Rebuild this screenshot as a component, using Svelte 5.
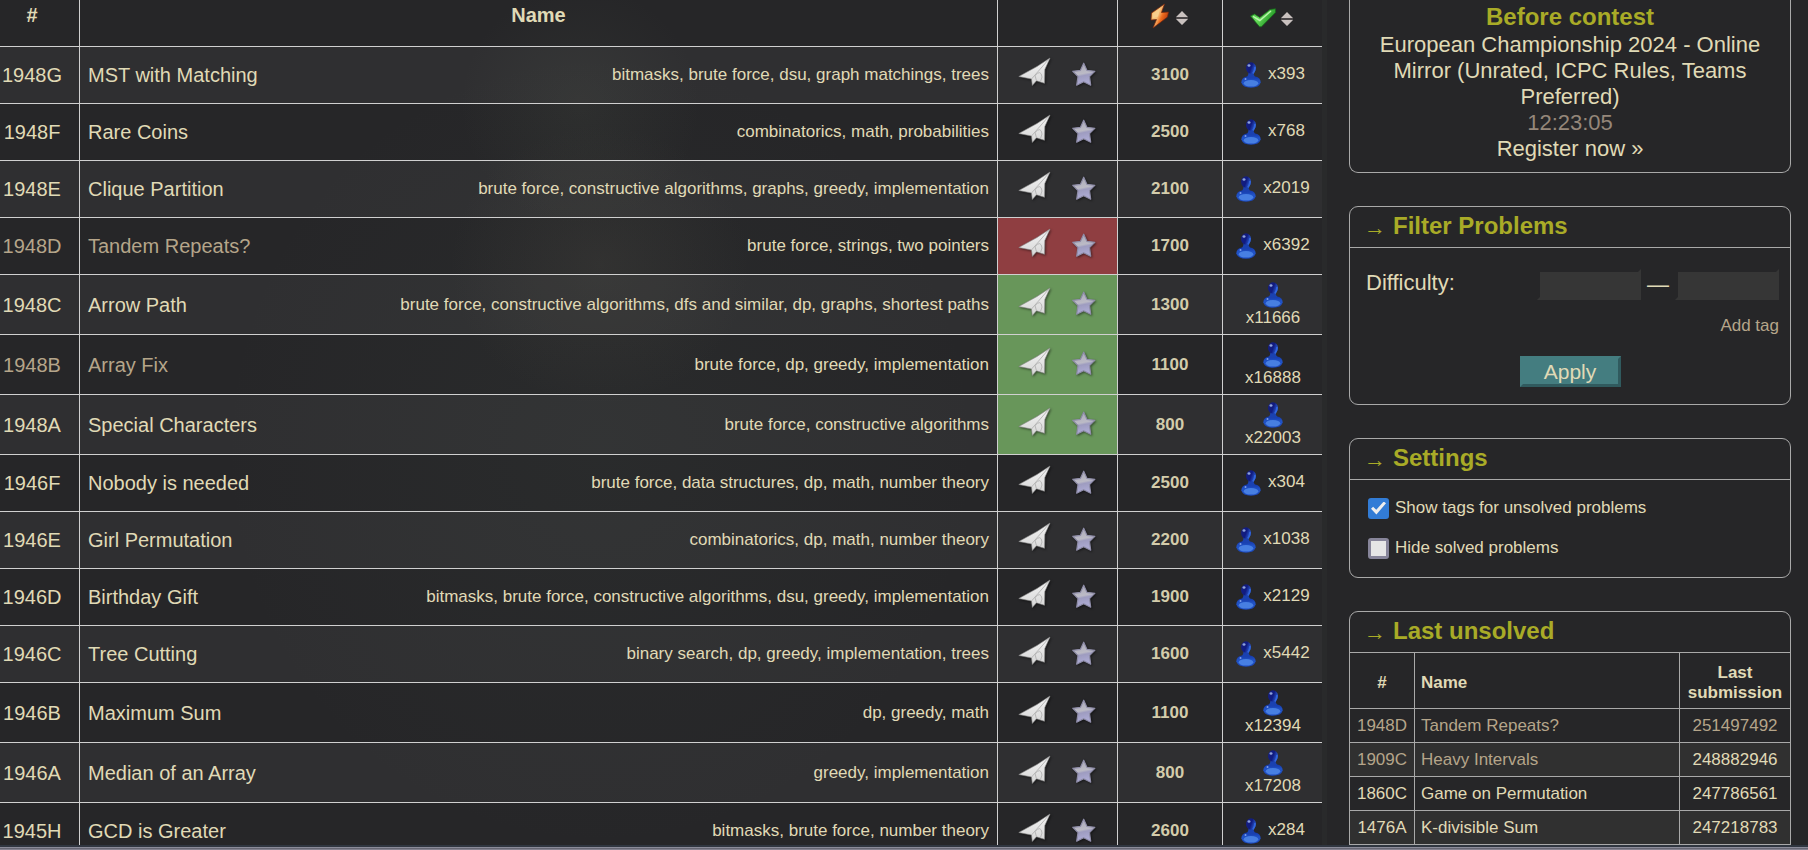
<script>
  const problems = [
    { id: '1948G', name: 'MST with Matching', tags: 'bitmasks, brute force, dsu, graph matchings, trees', rating: 3100, solved: 393 },
    { id: '1948F', name: 'Rare Coins', tags: 'combinatorics, math, probabilities', rating: 2500, solved: 768 },
    { id: '1948E', name: 'Clique Partition', tags: 'brute force, constructive algorithms, graphs, greedy, implementation', rating: 2100, solved: 2019 },
    { id: '1948D', name: 'Tandem Repeats?', tags: 'brute force, strings, two pointers', rating: 1700, solved: 6392, state: 'rejected', visited: true },
    { id: '1948C', name: 'Arrow Path', tags: 'brute force, constructive algorithms, dfs and similar, dp, graphs, shortest paths', rating: 1300, solved: 11666, state: 'accepted' },
    { id: '1948B', name: 'Array Fix', tags: 'brute force, dp, greedy, implementation', rating: 1100, solved: 16888, state: 'accepted', visited: true },
    { id: '1948A', name: 'Special Characters', tags: 'brute force, constructive algorithms', rating: 800, solved: 22003, state: 'accepted' },
    { id: '1946F', name: 'Nobody is needed', tags: 'brute force, data structures, dp, math, number theory', rating: 2500, solved: 304 },
    { id: '1946E', name: 'Girl Permutation', tags: 'combinatorics, dp, math, number theory', rating: 2200, solved: 1038 },
    { id: '1946D', name: 'Birthday Gift', tags: 'bitmasks, brute force, constructive algorithms, dsu, greedy, implementation', rating: 1900, solved: 2129 },
    { id: '1946C', name: 'Tree Cutting', tags: 'binary search, dp, greedy, implementation, trees', rating: 1600, solved: 5442 },
    { id: '1946B', name: 'Maximum Sum', tags: 'dp, greedy, math', rating: 1100, solved: 12394 },
    { id: '1946A', name: 'Median of an Array', tags: 'greedy, implementation', rating: 800, solved: 17208 },
    { id: '1945H', name: 'GCD is Greater', tags: 'bitmasks, brute force, number theory', rating: 2600, solved: 284 }
  ];

  const unsolved = [
    { id: '1948D', name: 'Tandem Repeats?', submission: '251497492', visited: true, opened: true },
    { id: '1909C', name: 'Heavy Intervals', submission: '248882946', visited: true },
    { id: '1860C', name: 'Game on Permutation', submission: '247786561' },
    { id: '1476A', name: 'K-divisible Sum', submission: '247218783' }
  ];

  let showTags = $state(true);
  let hideSolved = $state(false);
  const rows = $derived(hideSolved ? problems.filter((p) => p.state !== 'accepted') : problems);
</script>

{#snippet sorter()}
  <svg class="sorter" width="12" height="14" viewBox="0 0 12 14" aria-hidden="true">
    <path d="M6 0 12 6H0Z M6 14 12 8H0Z" fill="#c9c1bf" />
    <path d="M0 6h12v2H0z" fill="#4a4648" />
  </svg>
{/snippet}

<svg class="defs" width="0" height="0" aria-hidden="true">
  <defs>
    <linearGradient id="paper" x1="0" y1="0" x2="0" y2="1">
      <stop offset="0" stop-color="#f4f4f4" /><stop offset="1" stop-color="#d6d6d6" />
    </linearGradient>
    <linearGradient id="starfill" x1="0.3" y1="0" x2="0.5" y2="1">
      <stop offset="0" stop-color="#aaa9b8" /><stop offset="0.48" stop-color="#bcbbc6" />
      <stop offset="0.58" stop-color="#9e9cc0" /><stop offset="1" stop-color="#b0aed8" />
    </linearGradient>
    <linearGradient id="bolt" x1="0" y1="0.2" x2="1" y2="0.8">
      <stop offset="0" stop-color="#f2a44d" /><stop offset="0.4" stop-color="#f6c37c" />
      <stop offset="0.6" stop-color="#ee6c1e" /><stop offset="1" stop-color="#9b2408" />
    </linearGradient>
    <linearGradient id="tick" x1="0" y1="0" x2="1" y2="0.5">
      <stop offset="0" stop-color="#2f9f32" /><stop offset="0.45" stop-color="#6be05e" />
      <stop offset="1" stop-color="#178a1c" />
    </linearGradient>
    <linearGradient id="head" x1="0" y1="0" x2="1" y2="0.4">
      <stop offset="0" stop-color="#182080" /><stop offset="0.6" stop-color="#101b80" />
      <stop offset="1" stop-color="#2a59d0" />
    </linearGradient>
    <linearGradient id="base" x1="0" y1="0" x2="0" y2="1">
      <stop offset="0" stop-color="#1437a8" /><stop offset="0.4" stop-color="#2153c6" />
      <stop offset="1" stop-color="#1b49bd" />
    </linearGradient>
  </defs>
</svg>

<div class="page">
  <div class="content">
    <main>
      <table class="problems">
        <colgroup><col class="c-id" /><col /><col class="c-act" /><col class="c-rate" /><col class="c-solved" /></colgroup>
        <thead>
          <tr>
            <th>#</th>
            <th>Name</th>
            <th></th>
            <th>
              <button class="sort" aria-label="Sort by difficulty">
                <svg width="20" height="26" viewBox="0 0 20 26" aria-hidden="true">
                  <path d="M14.500 1 1.500 10 1 17 6.500 16.500 3 25 17.500 14 18.500 9 11.500 9.500Z" fill="url(#bolt)" stroke="#7a250c" stroke-width="0.700" />
                  <path d="M2.500 10.500 10 5.500 8 13.500 2.500 15.500Z" fill="#f8d293" opacity="0.8" />
                </svg>
                {@render sorter()}
              </button>
            </th>
            <th>
              <button class="sort solved-sort" aria-label="Sort by solved count">
                <svg width="26" height="20" viewBox="0 0 26 20" aria-hidden="true">
                  <path d="M0.500 8 4.500 6 9.800 9.500 20 1.500 25.500 0.800 25.500 4.500 11.500 18.800H9.500Z" fill="url(#tick)" stroke="#176a1b" stroke-width="0.800" />
                  <path d="M3 8.300 9.800 12.500 21 3" fill="none" stroke="#b9f4ac" stroke-width="1.500" />
                </svg>
                {@render sorter()}
              </button>
            </th>
          </tr>
        </thead>
        <tbody>
          {#each rows as p (p.id)}
            <tr class:tall={p.solved > 9999}>
              <td class="id"><a href="#{p.id}" class:visited={p.visited}>{p.id}</a></td>
              <td class="name">
                <div class="title">
                  <a href="#{p.id}" class:visited={p.visited}>{p.name}</a>
                  {#if showTags}<span class="tags">{p.tags}</span>{/if}
                </div>
              </td>
              <td class="act {p.state ?? ''}">
                <div class="actions">
                  <button aria-label="Submit {p.id}">
                    <svg class="plane" width="34" height="30" viewBox="0 0 34 30" aria-hidden="true">
                      <path d="M32 1 19 9.500 0.800 19.500 13.500 22 14.300 28.500 18.500 23.800 26.500 26.300 26.800 12.500Z" fill="url(#paper)" stroke="#8a8a8a" stroke-width="0.600" />
                      <path d="M31 2 13.500 22M17 18.500Q23 12 24 20L22.500 24.500M17 18.500 18.500 23.800" fill="none" stroke="#b2b2b2" stroke-width="0.900" />
                    </svg>
                  </button>
                  <button aria-label="Add {p.id} to favourites">
                    <svg class="star" width="24" height="25" viewBox="0 0 24 25" aria-hidden="true">
                      <path d="M11.700 1.200 14.900 8.300 22.800 9.300 17.500 14.600 18.700 23.200 11.700 19.800 4.700 23.200 6 14.600 0.800 9.300 8.500 8.300Z" fill="url(#starfill)" stroke="#8f8da8" stroke-width="1.200" stroke-linejoin="round" />
                    </svg>
                  </button>
                </div>
              </td>
              <td class="rating">{p.rating}</td>
              <td>
                <a class="count" href="#solved-{p.id}">
                  <svg width="20" height="26" viewBox="0 0 20 26" aria-hidden="true">
                    <path d="M0.300 20.500Q0.500 15.500 5.500 14.500H14.500Q19.500 15.500 19.700 20.500Q18 25.700 10 25.700Q2 25.700 0.300 20.500Z" fill="url(#base)" />
                    <path d="M7.500 9H12.500Q12 13 15 16H5Q8 13 7.500 9Z" fill="#1a41b0" />
                    <ellipse cx="10" cy="6" rx="5" ry="5.700" fill="url(#head)" />
                    <path d="M12 11.500Q14 8.500 14 5" fill="none" stroke="#3266dc" stroke-width="1.600" />
                    <ellipse cx="10" cy="21.300" rx="7.300" ry="3.300" fill="#477fe2" />
                    <ellipse cx="8" cy="3.500" rx="1.500" ry="1.200" fill="#8fa3dc" />
                    <circle cx="4.500" cy="16.900" r="1" fill="#7fa0ea" />
                  </svg>
                  <span>x{p.solved}</span>
                </a>
              </td>
            </tr>
          {/each}
        </tbody>
      </table>
    </main>

    <aside>
      <section class="box contest">
        <h2>Before contest</h2>
        <a href="#contest">European Championship 2024 - Online Mirror (Unrated, ICPC Rules, Teams Preferred)</a>
        <span class="timer">12:23:05</span>
        <a href="#register">Register now »</a>
      </section>

      <section class="box">
        <h2 class="caption"><span class="arrow">→</span>Filter Problems</h2>
        <form class="filter" onsubmit={(e) => e.preventDefault()}>
          <div class="range">
            <label for="min">Difficulty:</label>
            <input id="min" type="text" />
            <span>—</span>
            <input type="text" aria-label="Maximum difficulty" />
          </div>
          <a class="add visited" href="#tag">Add tag</a>
          <button class="apply">Apply</button>
        </form>
      </section>

      <section class="box">
        <h2 class="caption"><span class="arrow">→</span>Settings</h2>
        <div class="settings">
          <label><input type="checkbox" bind:checked={showTags} />Show tags for unsolved problems</label>
          <label><input type="checkbox" bind:checked={hideSolved} />Hide solved problems</label>
        </div>
      </section>

      <section class="box open">
        <h2 class="caption"><span class="arrow">→</span>Last unsolved</h2>
        <table class="last">
          <colgroup><col class="l-id" /><col /><col class="l-sub" /></colgroup>
          <thead>
            <tr><th>#</th><th class="left">Name</th><th>Last submission</th></tr>
          </thead>
          <tbody>
            {#each unsolved as u (u.id)}
              <tr>
                <td><a href="#{u.id}" class:visited={u.visited}>{u.id}</a></td>
                <td class="left"><a href="#{u.id}" class:visited={u.visited}>{u.name}</a></td>
                <td><a href="#s{u.submission}" class:visited={u.opened}>{u.submission}</a></td>
              </tr>
            {/each}
          </tbody>
        </table>
      </section>
    </aside>
  </div>
  <footer></footer>
</div>

<style>
  :global(body) { margin: 0; background: #262628; }
  .defs { position: absolute; }
  .page {
    height: 100vh; display: flex; flex-direction: column; overflow: hidden;
    font-family: "Liberation Sans", Arial, sans-serif; font-size: 17px; line-height: 20px; color: #e0dab6;
  }
  .page * { box-sizing: border-box; }
  a { color: #e0dab6; text-decoration: none; }
  .visited { color: #b5a58a; }
  svg { display: block; flex: none; }
  button { font: inherit; color: inherit; background: none; border: 0; padding: 0; cursor: pointer; }
  table { width: 100%; table-layout: fixed; border-collapse: separate; border-spacing: 0; }
  .content { flex: 1; min-height: 0; display: flex; overflow: hidden; }
  main {
    flex: 1; min-width: 0; border-right: 5px solid #292a2b;
    background:
      radial-gradient(circle 120px at 580px 105px, rgba(110, 120, 100, 0.1), transparent),
      radial-gradient(ellipse 150px 140px at 600px 265px, rgba(115, 110, 95, 0.13), transparent),
      radial-gradient(ellipse 380px 400px at 600px 450px, rgba(90, 110, 95, 0.07), transparent);
  }
  .c-id { width: 80px; }
  .c-act { width: 120px; }
  .c-rate { width: 105px; }
  .c-solved { width: 99px; }
  .problems th, .problems td { padding: 0; border-bottom: 1px solid #d0d0d0; border-right: 1px solid #d0d0d0; text-align: center; vertical-align: middle; }
  .problems th:last-child, .problems td:last-child { border-right: 0; }
  .problems th { height: 47px; padding-bottom: 16px; font-size: 20px; line-height: 22px; }
  .problems th:first-child, .problems td:first-child { padding-right: 15px; }
  .problems tbody tr { height: 57px; }
  .problems tbody tr.tall { height: 60px; }
  .problems tbody tr:nth-child(odd) { background: rgba(255, 255, 255, 0.045); }
  .id, .title > a { font-size: 20px; line-height: 24px; }
  .sort { display: flex; align-items: center; justify-content: center; gap: 6px; width: 100%; padding: 2px 2px 0 0; }
  .solved-sort { padding: 5px 3px 0 0; gap: 5px; }
  .sorter { margin-top: 3px; }
  .title { display: flex; justify-content: space-between; align-items: center; padding: 0 8px; white-space: nowrap; }
  .actions { display: flex; justify-content: center; align-items: center; gap: 20px; padding: 0 2px 6px 0; }
  .plane, .star { filter: drop-shadow(1px 1px 1px rgba(0, 0, 0, 0.5)); }
  .star { margin-top: 4px; }
  .rejected { background: #8f3e41; }
  .accepted { background: #68965a; }
  .problems .rating { font-weight: bold; color: #d3ccab; }
  .count { display: flex; flex-wrap: wrap; justify-content: center; align-items: center; column-gap: 7px; padding: 0 9px 0 10px; }
  .count span { padding-bottom: 2px; line-height: 20px; }
  .tall .count span { padding-bottom: 0; }

  aside { flex: 0 0 481px; padding: 0 17px 0 22px; display: flex; flex-direction: column; gap: 33px; }
  .box { flex: none; border: 1px solid #a9a9a9; border-radius: 9px; overflow: hidden; }
  .open { border-bottom-left-radius: 0; border-bottom-right-radius: 0; }
  .contest {
    border-top: 0; border-top-left-radius: 0; border-top-right-radius: 0;
    display: flex; flex-direction: column; text-align: center; font-size: 22px; line-height: 26px; padding: 2px 16px 10px;
  }
  h2 { margin: 0; font-size: 24px; line-height: 29px; color: #a9ab27; }
  .contest h2 { padding-bottom: 1px; }
  .timer { color: #95877a; }
  .caption { display: flex; align-items: center; gap: 7px; height: 41px; padding: 0 14px 3px; border-bottom: 1px solid #a9a9a9; }
  .arrow { width: 22px; font-size: 22px; font-weight: normal; padding-top: 4px; line-height: 24px; }
  .filter { display: flex; flex-direction: column; padding: 21px 11px 17px 16px; }
  .range { display: flex; align-items: center; font-size: 22px; gap: 6px; height: 31px; }
  .range label { margin-right: auto; padding-bottom: 3px; }
  .range input {
    width: 104px; height: 31px; padding: 0 4px; background: #363636; color: #e0dab6; font: inherit;
    border: 3px solid; border-color: #262628 #363636 #363636 #262628; outline: 0;
  }
  .add { align-self: flex-end; margin-top: 16px; }
  .apply {
    align-self: center; margin: 20px 5px 0 0; width: 101px; height: 31px; font-size: 21px; line-height: 24px;
    background: #447d80; border: 3px solid; border-color: #447d80 #305a5e #305a5e #447d80; color: #e0dab6;
  }
  .settings { display: flex; flex-direction: column; gap: 18px; padding: 17px 18px 18px; }
  .settings label { display: flex; align-items: center; gap: 6px; height: 22px; }
  .settings input {
    appearance: none; margin: 0; width: 21px; height: 21px; border: 3px solid #87859a; border-radius: 3px;
    background: #e6e6e6; display: grid; place-items: center;
  }
  .settings input:checked { background: #327cd6; border-color: #327cd6; }
  .settings input:checked::before {
    content: ""; width: 15px; height: 13px; background: #eeeeee;
    clip-path: polygon(0 55%, 14% 40%, 35% 64%, 85% 0, 100% 14%, 36% 100%);
  }
  .l-id { width: 65px; }
  .l-sub { width: 110px; }
  .last th, .last td { height: 34px; padding: 0 6px; text-align: center; border-right: 1px solid #a9a9a9; border-bottom: 1px solid #a9a9a9; }
  .last th:last-child, .last td:last-child { border-right: 0; padding: 0 4px; }
  .last th { height: 56px; padding-top: 4px; }
  .last th:last-child { padding-top: 4px; }
  .last .left { text-align: left; }
  .last tbody tr:nth-child(even) { background: #303030; }
  footer { flex: none; height: 5px; background: linear-gradient(#303640 0 2px, #8b8b99 2px 3px, #666672 3px 4px, #858391 4px 5px); }
</style>
